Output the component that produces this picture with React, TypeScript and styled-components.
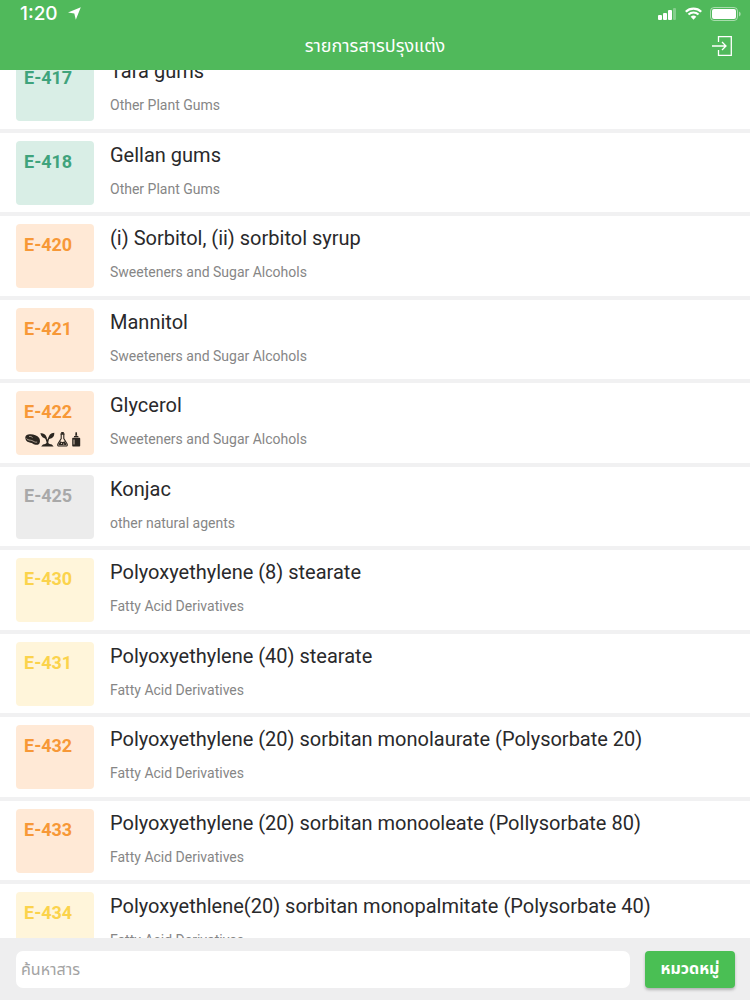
import React, { useLayoutEffect, useRef } from "react";
import styled, { createGlobalStyle } from "styled-components";

const GlobalStyle = createGlobalStyle`
  * { box-sizing: border-box; }
  body {
    margin: 0;
    background: #fff;
    font-family: Roboto, "Noto Sans Thai", "Noto Sans", sans-serif;
  }
`;

type Tone = "green" | "orange" | "grey" | "yellow";

const tones: Record<Tone, { ink: string; fill: string }> = {
  green: { ink: "#3fa37c", fill: "#d9eee6" },
  orange: { ink: "#f79837", fill: "#ffe9d6" },
  grey: { ink: "#a9a9a9", fill: "#ececec" },
  yellow: { ink: "#fbd34c", fill: "#fff5da" },
};

const Screen = styled.div`
  display: flex;
  flex-direction: column;
  height: 100vh;
`;

const Header = styled.header`
  flex: none;
  background: #50b95b;
  color: #fff;
`;

const StatusBar = styled.div`
  display: flex;
  align-items: center;
  justify-content: space-between;
  height: 27px;
  padding: 0 9px 0 20px;
`;

const StatusGroup = styled.div`
  display: flex;
  align-items: center;
  gap: 8px;
`;

const Clock = styled.span`
  min-width: 40px;
  font: 500 19px/26px Inter, sans-serif;
`;

const NavBar = styled.div`
  display: grid;
  grid-template-columns: 1fr auto 1fr;
  align-items: center;
  height: 43px;
  padding: 0 17px 5px;
`;

const PageTitle = styled.h1`
  grid-column: 2;
  margin: 0;
  font-size: 18px;
  font-weight: 400;
  line-height: 26px;
`;

const IconButton = styled.button`
  justify-self: end;
  display: flex;
  padding: 0;
  border: 0;
  background: none;
  color: inherit;
`;

const List = styled.ul`
  flex: 1;
  min-height: 0;
  margin: 0;
  padding: 0;
  overflow-y: auto;
  scrollbar-width: none;
  list-style: none;
`;

const Row = styled.li`
  display: flex;
  gap: 16px;
  height: 83px;
  padding: 8px 16px 0;
  border-bottom: 4px solid #f1f1f2;

  &:nth-child(odd) {
    height: 84px;
  }
`;

const Tile = styled.div<{ $tone: Tone }>`
  display: flex;
  flex: none;
  flex-direction: column;
  justify-content: space-between;
  width: 78px;
  height: 64px;
  padding: 9px 8px 8px;
  border-radius: 4px;
  background: ${(p) => tones[p.$tone].fill};
  color: ${(p) => tones[p.$tone].ink};
`;

const Code = styled.span`
  font-size: 18px;
  font-weight: 700;
  line-height: 24px;
`;

const Sources = styled.div`
  display: flex;
  padding-left: 1px;
  color: #2c2620;
`;

const Details = styled.div`
  min-width: 0;
`;

const Name = styled.h2`
  margin: 0 0 10px;
  color: #29292b;
  font-size: 20px;
  font-weight: 400;
  line-height: 28px;
  white-space: nowrap;
`;

const Category = styled.p`
  margin: 0;
  color: #868686;
  font-size: 14px;
  line-height: 20px;
`;

const SearchBar = styled.form`
  display: flex;
  flex: none;
  align-items: center;
  gap: 15px;
  height: 62px;
  padding: 0 15px 0 16px;
  background: #eeeeef;
`;

const SearchInput = styled.input`
  flex: 1;
  min-width: 0;
  height: 37px;
  padding: 0 5px;
  border: 0;
  border-radius: 7px;
  background: #fff;
  color: #333;
  font-family: inherit;
  font-size: 16px;

  &::placeholder {
    color: #a3a3a3;
    opacity: 1;
  }
`;

const CategoryButton = styled.button`
  width: 90px;
  height: 37px;
  padding: 0;
  border: 0;
  border-radius: 4px;
  background: #4abf54;
  box-shadow: 0 2px 3px rgba(0, 0, 0, 0.25);
  color: #fff;
  font-family: inherit;
  font-size: 16px;
  font-weight: 700;
`;

const LocationIcon = () => (
  <svg width="13" height="13" viewBox="0 0 13 13" fill="currentColor" aria-hidden="true">
    <path d="M12.800.300 0 5.600l6.300 1L7.800 12.800z" />
  </svg>
);

const SignalIcon = () => (
  <svg width="21" height="12" viewBox="0 0 21 12" fill="currentColor" aria-hidden="true">
    <rect x="2" y="7" width="4" height="5" rx="1" />
    <rect x="7" y="5" width="4" height="7" rx="1" />
    <rect x="12" y="2" width="4" height="10" rx="1" />
    <rect x="17" y="0" width="3" height="12" rx="1" opacity=".3" />
  </svg>
);

const WifiIcon = () => (
  <svg width="17" height="13" viewBox="0 0 17 13" aria-hidden="true">
    <g fill="none" stroke="currentColor" strokeWidth="2.200">
      <path d="M.8 4.700a11 11 0 0 1 15.400 0" />
      <path d="M3.500 7.500a7.200 7.200 0 0 1 10 0" />
    </g>
    <path d="M5.700 9.800a4 4 0 0 1 5.600 0L8.500 12.700z" fill="currentColor" />
  </svg>
);

const BatteryIcon = () => (
  <svg width="31" height="14" viewBox="0 0 31 14" aria-hidden="true">
    <rect x=".5" y=".5" width="27" height="13" rx="3.500" fill="none" stroke="currentColor" opacity=".5" />
    <rect x="2" y="2" width="24" height="10" rx="2" fill="currentColor" />
    <path d="M29 4.500q1.700.7 1.700 2.500T29 9.500z" fill="currentColor" opacity=".5" />
  </svg>
);

const EnterIcon = () => (
  <svg width="22" height="20" viewBox="0 0 22 20" fill="none" stroke="currentColor" strokeWidth="1.300" aria-hidden="true">
    <path d="M7.500 6V.7h12.800v18.600H7.500V14M1 10h14M11 6l4 4-4 4" />
  </svg>
);

const MeatIcon = () => (
  <svg width="15" height="15" viewBox="0 0 15 15" aria-hidden="true">
    <path d="M.3 5.300C.4 2.800 3 2 5.500 2.200 9 2.300 12.200 3.200 14.200 6c1.200 2 1 4.800-.5 6.200-1.600 1.200-4.200.6-5.700-.5C6.300 10.700 4.500 10.900 2.500 9.800 1.200 9 .2 7.300.3 5.300z" fill="currentColor" />
    <g fill="none" stroke="#ffe9d6" strokeWidth=".6">
      <path d="M1.500 6.500c1.500 2 3.500 1.400 5.300 2 1.800.7 3.200 2.200 5.400 1.600" />
      <path d="M4 4.500c1.700-.4 2.600.2 3.600 1.200" />
    </g>
  </svg>
);

const PlantIcon = () => (
  <svg width="15" height="15" viewBox="0 0 15 15" aria-hidden="true">
    <path d="M.3 1.300c4 0 6 1.700 6.600 5.200C3.200 6.500 1.200 4.900.3 1.300zM14.300.8c.1 4-1.900 6-6 6.200C8.500 3.300 10.500 1.200 14.300.8zM1.200 14.500c1-1.700 2.500-2.500 4-2.500 1.200-1.300 3.200-1.300 4.400 0 1.600 0 3 .8 4 2.500z" fill="currentColor" />
    <path d="M3 3.200c3.200 2 4.300 4.500 4.400 9.300M11.500 3.500C8.500 5.500 7.400 8 7.400 12" fill="none" stroke="currentColor" strokeWidth="1.500" />
  </svg>
);

const FlaskIcon = () => (
  <svg width="15" height="15" viewBox="0 0 15 15" aria-hidden="true">
    <path d="M5.300 2h4.400M6.200 2v4.500L3 11.800c-.7 1.300-.2 2.200 1.100 2.200h6.800c1.300 0 1.800-.9 1.100-2.200L8.800 6.500V2" fill="none" stroke="currentColor" strokeWidth="1.100" />
    <path d="M6.200 0h2.600v2.500H6.200zM5.300 9.300q2 1.400 4.400 0l1.700 3q.4.900-.6.900H4.200q-1 0-.6-.9z" fill="currentColor" />
    <circle cx="6.500" cy="11.300" r=".6" fill="#ffe9d6" />
    <circle cx="8.700" cy="12" r=".6" fill="#ffe9d6" />
  </svg>
);

const BottleIcon = () => (
  <svg width="12" height="15" viewBox="0 0 12 15" fill="currentColor" aria-hidden="true">
    <path d="M5.500.2h1.400l.3 3.500H5.200zM4 4h4.400v1.200H4zM2.200 6.500q0-.8.800-.8h6.400q.8 0 .8.800v7.200q0 .8-.8.800H3q-.8 0-.8-.8z" />
    <path d="M4 7.500v5" stroke="#ffe9d6" strokeWidth=".8" />
  </svg>
);

interface Additive {
  code: string;
  name: string;
  category: string;
  tone: Tone;
  sources?: boolean;
}

const additives: Additive[] = [
  { code: "E-417", name: "Tara gums", category: "Other Plant Gums", tone: "green" },
  { code: "E-418", name: "Gellan gums", category: "Other Plant Gums", tone: "green" },
  { code: "E-420", name: "(i) Sorbitol, (ii) sorbitol syrup", category: "Sweeteners and Sugar Alcohols", tone: "orange" },
  { code: "E-421", name: "Mannitol", category: "Sweeteners and Sugar Alcohols", tone: "orange" },
  { code: "E-422", name: "Glycerol", category: "Sweeteners and Sugar Alcohols", tone: "orange", sources: true },
  { code: "E-425", name: "Konjac", category: "other natural agents", tone: "grey" },
  { code: "E-430", name: "Polyoxyethylene (8) stearate", category: "Fatty Acid Derivatives", tone: "yellow" },
  { code: "E-431", name: "Polyoxyethylene (40) stearate", category: "Fatty Acid Derivatives", tone: "yellow" },
  { code: "E-432", name: "Polyoxyethylene (20) sorbitan monolaurate (Polysorbate 20)", category: "Fatty Acid Derivatives", tone: "orange" },
  { code: "E-433", name: "Polyoxyethylene (20) sorbitan monooleate (Pollysorbate 80)", category: "Fatty Acid Derivatives", tone: "orange" },
  { code: "E-434", name: "Polyoxyethlene(20) sorbitan monopalmitate (Polysorbate 40)", category: "Fatty Acid Derivatives", tone: "yellow" },
];

const INITIAL_SCROLL = 21;

export default function App() {
  const listRef = useRef<HTMLUListElement>(null);

  useLayoutEffect(() => {
    if (listRef.current) listRef.current.scrollTop = INITIAL_SCROLL;
  }, []);

  return (
    <Screen>
      <GlobalStyle />
      <Header>
        <StatusBar>
          <StatusGroup>
            <Clock>1:20</Clock>
            <LocationIcon />
          </StatusGroup>
          <StatusGroup>
            <SignalIcon />
            <WifiIcon />
            <BatteryIcon />
          </StatusGroup>
        </StatusBar>
        <NavBar>
          <PageTitle>รายการสารปรุงแต่ง</PageTitle>
          <IconButton type="button" aria-label="เข้าสู่ระบบ">
            <EnterIcon />
          </IconButton>
        </NavBar>
      </Header>
      <List ref={listRef}>
        {additives.map((item) => (
          <Row key={item.code}>
            <Tile $tone={item.tone}>
              <Code>{item.code}</Code>
              {item.sources && (
                <Sources>
                  <MeatIcon />
                  <PlantIcon />
                  <FlaskIcon />
                  <BottleIcon />
                </Sources>
              )}
            </Tile>
            <Details>
              <Name>{item.name}</Name>
              <Category>{item.category}</Category>
            </Details>
          </Row>
        ))}
      </List>
      <SearchBar onSubmit={(e) => e.preventDefault()}>
        <SearchInput type="text" placeholder="ค้นหาสาร" aria-label="ค้นหาสาร" />
        <CategoryButton type="button">หมวดหมู่</CategoryButton>
      </SearchBar>
    </Screen>
  );
}
